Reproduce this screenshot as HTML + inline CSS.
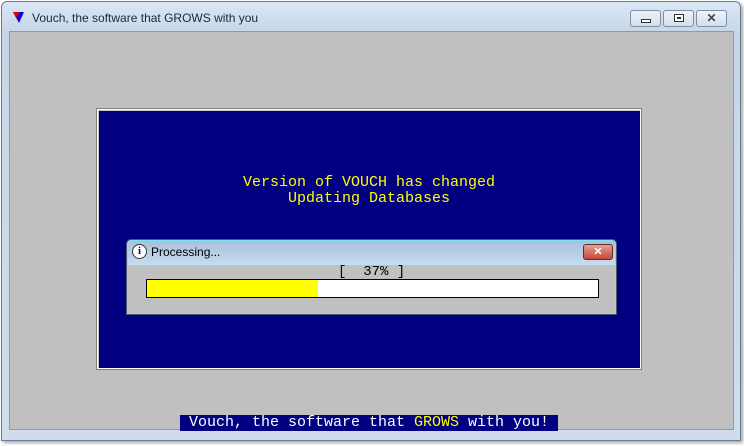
<!DOCTYPE html>
<html><head><style>
*{margin:0;padding:0;box-sizing:border-box}
body{width:744px;height:446px;background:#fff;position:relative;overflow:hidden;font-family:"Liberation Sans",sans-serif}
.frame{position:absolute;left:1px;top:1px;width:740px;height:440px;border:1px solid #6b7d94;border-radius:6px 6px 0 0;background:linear-gradient(#dbe6f3,#c7d6e8 30px,#cfdcec);box-shadow:2px 2px 3px rgba(0,0,0,.35)}
.client{position:absolute;left:9px;top:31px;width:725px;height:399px;background:#c0c0c0;border:1px solid #8a9bb0}
.title{position:absolute;left:32px;top:11px;font-size:12px;color:#1e2a3a}
.btn{position:absolute;top:10px;height:17px;border:1px solid #7d8ea6;border-radius:3px;background:linear-gradient(#eef3f9,#d3deeb)}
.mono{font-family:"Liberation Mono",monospace;font-size:15px}
</style></head><body>
<div class="frame"></div>
<svg style="position:absolute;left:13px;top:12px" width="12" height="12"><polygon points="0,0 11,0 6,11" fill="#0000e0"/><polygon points="0,0 7,0 3,6" fill="#e00000"/></svg>
<div class="title">Vouch, the software that GROWS with you</div>
<div class="btn" style="left:630px;width:31px"><div style="position:absolute;left:10px;top:8px;width:10px;height:4px;border:1px solid #333;background:#fff"></div></div>
<div class="btn" style="left:663px;width:31px"><div style="position:absolute;left:10px;top:3px;width:10px;height:8px;border:1px solid #333;background:#fff"><div style="margin:2px 2px;width:4px;height:2px;background:#333"></div></div></div>
<div class="btn" style="left:696px;width:31px;text-align:center;font-size:12px;line-height:15px;color:#444;font-weight:bold">✕</div>
<div class="client"></div>
<div style="position:absolute;left:97px;top:109px;width:544px;height:260px;background:#000080;border:1px solid #fff;outline:1px solid #808080;box-shadow:inset 1px 1px 0 #c0c0c0"></div>
<div class="mono" style="position:absolute;left:97px;width:544px;top:175px;text-align:center;color:#ffff00;line-height:16px">Version of VOUCH has changed<br>Updating Databases</div>
<div style="position:absolute;left:126px;top:239px;width:491px;height:76px;border:1px solid #4a5a6e;border-radius:5px 5px 0 0;background:#c0c0c0;box-shadow:inset 0 0 0 1px #7fe0f0">
 <div style="position:absolute;left:1px;top:1px;right:1px;height:24px;border-radius:4px 4px 0 0;background:linear-gradient(#a8c0da,#c6dcf0)"></div>
 <div style="position:absolute;left:5px;top:4px;width:15px;height:15px;border-radius:50%;background:#fff;border:1px solid #333;color:#00c;font:bold 11px 'Liberation Serif',serif;text-align:center;line-height:13px">i</div>
 <div style="position:absolute;left:24px;top:5px;font-size:12px;color:#000">Processing...</div>
 <div style="position:absolute;left:456px;top:4px;width:30px;height:16px;border:1px solid #6b2a2a;border-radius:3px;background:linear-gradient(#e6a090,#c4473a);color:#fff;font-weight:bold;font-size:11px;text-align:center;line-height:14px">✕</div>
 <div class="mono" style="position:absolute;left:211px;top:24px;color:#000;white-space:pre;font-size:14px">[  37% ]</div>
 <div style="position:absolute;left:19px;top:39px;width:453px;height:19px;border:1px solid #000;background:#fff"><div style="width:171px;height:17px;background:#ffff00"></div></div>
</div>
<div class="mono" style="position:absolute;left:180px;top:415px;width:378px;height:16px;background:#000080;color:#fff;text-align:center;line-height:16px;white-space:pre">Vouch, the software that <span style="color:#ffff00">GROWS</span> with you!</div>
</body></html>
